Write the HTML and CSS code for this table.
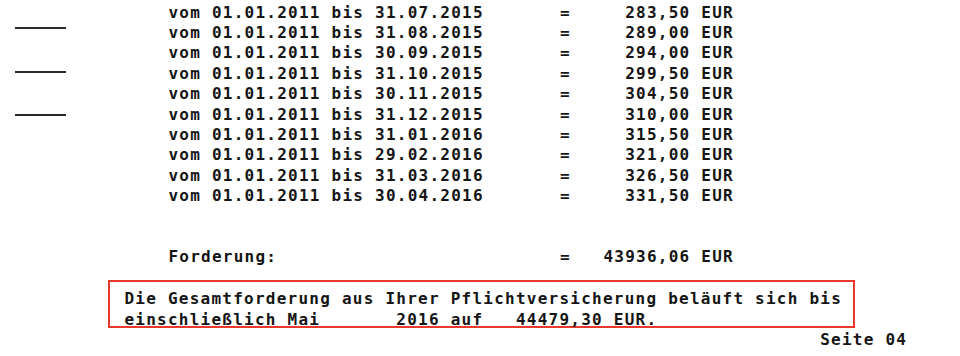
FILE: index.html
```html
<!DOCTYPE html>
<html lang="de">
<head>
<meta charset="utf-8">
<title>Forderungsaufstellung Seite 04</title>
<link rel="stylesheet" href="styles.css">
</head>
<body>
<div class="page">
  <div class="margin">
    <span class="mark"></span>
    <span class="mark"></span>
    <span class="mark"></span>
  </div>
  <div class="content">
<pre class="rows">vom 01.01.2011 bis 31.07.2015       =     283,50 EUR
vom 01.01.2011 bis 31.08.2015       =     289,00 EUR
vom 01.01.2011 bis 30.09.2015       =     294,00 EUR
vom 01.01.2011 bis 31.10.2015       =     299,50 EUR
vom 01.01.2011 bis 30.11.2015       =     304,50 EUR
vom 01.01.2011 bis 31.12.2015       =     310,00 EUR
vom 01.01.2011 bis 31.01.2016       =     315,50 EUR
vom 01.01.2011 bis 29.02.2016       =     321,00 EUR
vom 01.01.2011 bis 31.03.2016       =     326,50 EUR
vom 01.01.2011 bis 30.04.2016       =     331,50 EUR


Forderung:                          =   43936,06 EUR</pre>
    <div class="box">
<pre class="box-text">Die Gesamtforderung aus Ihrer Pflichtversicherung beläuft sich bis
einschließlich Mai       2016 auf   44479,30 EUR.</pre>
    </div>
<pre class="footer">Seite 04</pre>
  </div>
</div>
</body>
</html>
```

FILE: styles.css
```css
html, body {
  margin: 0;
  padding: 0;
  background: #ffffff;
}

.page {
  display: flex;
  width: 960px;
  height: 356px;
  overflow: hidden;
}

.margin {
  width: 108px;
  flex: none;
  display: flex;
  flex-direction: column;
  gap: 41.4px;
  padding-top: 27.3px;
  padding-left: 15px;
  box-sizing: border-box;
}

.mark {
  display: block;
  width: 51px;
  height: 2px;
  background: #2a2a2a;
}

.content {
  flex: 1;
  display: flex;
  flex-direction: column;
  align-items: flex-start;
}

pre {
  margin: 0;
  font-family: "DejaVu Sans Mono", "Liberation Mono", monospace;
  font-weight: bold;
  font-size: 16px;
  letter-spacing: 1.24px;
  line-height: 20.4px;
  color: #151515;
}

.rows {
  padding-top: 2.6px;
  padding-left: 60.5px;
}

.box {
  margin-top: 12.2px;
  border: 2px solid #e8392c;
  padding: 7.2px 11px 0 14.5px;
}

.box-text {
  margin-bottom: -4px;
}

.footer {
  margin-top: 1.8px;
  padding-left: 712.2px;
}
```
